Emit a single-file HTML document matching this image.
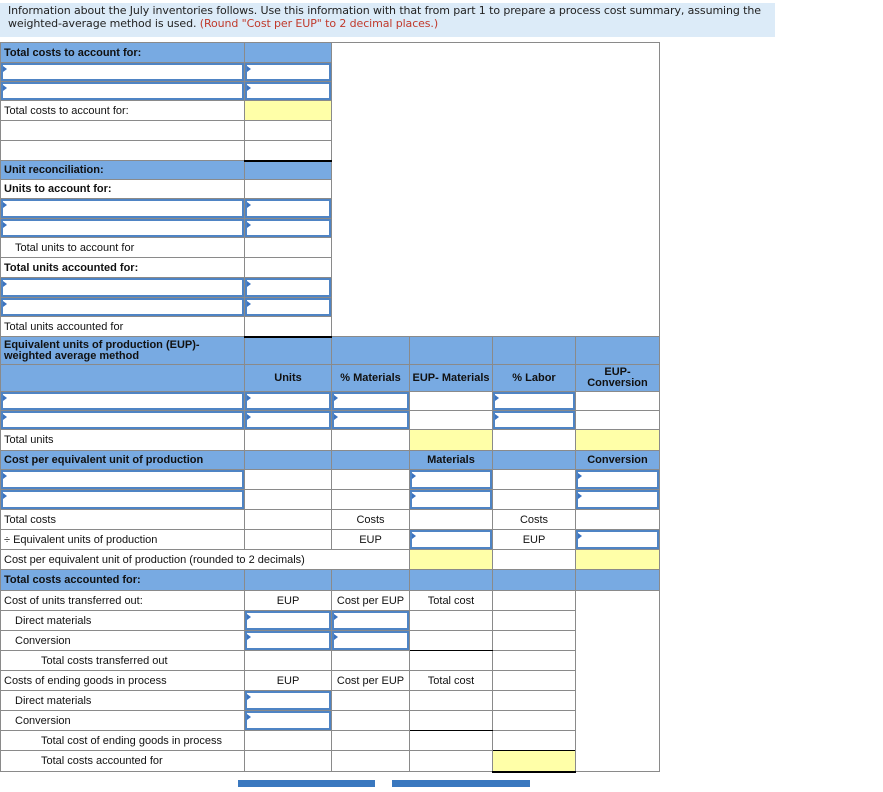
<!DOCTYPE html>
<html><head><meta charset="utf-8"><style>
body{margin:0;background:#fff;width:883px;height:792px;overflow:hidden;position:relative;font-family:"Liberation Sans",Arial,sans-serif;}
.hd{position:absolute;left:0;top:3px;width:775px;height:34px;background:#dcebf8;padding-left:8px;font-family:"DejaVu Sans",Verdana,sans-serif;font-size:11px;line-height:13px;color:#222;padding-top:1px;box-sizing:border-box;letter-spacing:-0.1px}
.hd span{color:#c0392b}
table{position:absolute;left:0;top:42px;border-collapse:collapse;table-layout:fixed;font-size:11px;color:#111}
td{border:1px solid #8a8a8a;padding:0 0 0 3px;white-space:nowrap;overflow:hidden;line-height:12px}
.b{background:#78aae2;font-weight:bold}
.i{box-shadow:inset 0 0 0 2px #4f84c4;position:relative}
.i:before{content:"";position:absolute;left:2px;top:3px;border-left:4px solid #3b73c0;border-top:3px solid transparent;border-bottom:3px solid transparent}
.y{background:#ffffa8}
.c{text-align:center;padding:0}
.bc{text-align:center;padding:0;font-weight:bold}
.p1{padding-left:14px}.p2{padding-left:40px}
.tb{border-bottom:2px solid #000}
.btn{position:absolute;top:780px;height:7px;background:#3a78bf}
</style></head><body>
<div class="hd">Information about the July inventories follows. Use this information with that from part 1 to prepare a process cost summary, assuming the weighted-average method is used. <span>(Round "Cost per EUP" to 2 decimal places.)</span></div>
<table>
<colgroup><col style="width:244px"><col style="width:87px"><col style="width:78px"><col style="width:83px"><col style="width:83px"><col style="width:84px"></colgroup>
<tr style="height:20px"><td class="b">Total costs to account for:</td><td class="b"></td><td colspan="4" rowspan="15" style="border-bottom:none;border-right:1px solid #8a8a8a"></td></tr>
<tr style="height:19px"><td class="i"></td><td class="i"></td></tr>
<tr style="height:19px"><td class="i"></td><td class="i"></td></tr>
<tr style="height:20px"><td>Total costs to account for:</td><td class="y"></td></tr>
<tr style="height:20px"><td></td><td></td></tr>
<tr style="height:20px"><td></td><td class="tb"></td></tr>
<tr style="height:19px"><td class="b">Unit reconciliation:</td><td class="b"></td></tr>
<tr style="height:19px"><td style="font-weight:bold">Units to account for:</td><td></td></tr>
<tr style="height:20px"><td class="i"></td><td class="i"></td></tr>
<tr style="height:19px"><td class="i"></td><td class="i"></td></tr>
<tr style="height:20px"><td class="p1">Total units to account for</td><td></td></tr>
<tr style="height:20px"><td style="font-weight:bold">Total units accounted for:</td><td></td></tr>
<tr style="height:20px"><td class="i"></td><td class="i"></td></tr>
<tr style="height:19px"><td class="i"></td><td class="i"></td></tr>
<tr style="height:20px"><td>Total units accounted for</td><td class="tb"></td></tr>
<tr style="height:28px"><td class="b" style="line-height:11px;white-space:normal">Equivalent units of production (EUP)-<br>weighted average method</td><td class="b"></td><td class="b"></td><td class="b"></td><td class="b"></td><td class="b"></td></tr>
<tr style="height:27px"><td class="b"></td><td class="b bc">Units</td><td class="b bc">% Materials</td><td class="b bc">EUP- Materials</td><td class="b bc">% Labor</td><td class="b bc" style="line-height:11px;white-space:normal">EUP-<br>Conversion</td></tr>
<tr style="height:19px"><td class="i"></td><td class="i"></td><td class="i"></td><td></td><td class="i"></td><td></td></tr>
<tr style="height:19px"><td class="i"></td><td class="i"></td><td class="i"></td><td></td><td class="i"></td><td></td></tr>
<tr style="height:21px"><td>Total units</td><td></td><td></td><td class="y"></td><td></td><td class="y"></td></tr>
<tr style="height:19px"><td class="b">Cost per equivalent unit of production</td><td class="b"></td><td class="b"></td><td class="b bc">Materials</td><td class="b"></td><td class="b bc">Conversion</td></tr>
<tr style="height:20px"><td class="i"></td><td></td><td></td><td class="i"></td><td></td><td class="i"></td></tr>
<tr style="height:20px"><td class="i"></td><td></td><td></td><td class="i"></td><td></td><td class="i"></td></tr>
<tr style="height:20px"><td>Total costs</td><td></td><td class="c">Costs</td><td></td><td class="c">Costs</td><td></td></tr>
<tr style="height:20px"><td>÷ Equivalent units of production</td><td></td><td class="c">EUP</td><td class="i"></td><td class="c">EUP</td><td class="i"></td></tr>
<tr style="height:20px"><td colspan="3" style="overflow:visible">Cost per equivalent unit of production (rounded to 2 decimals)</td><td class="y"></td><td></td><td class="y"></td></tr>
<tr style="height:21px"><td class="b">Total costs accounted for:</td><td class="b"></td><td class="b"></td><td class="b"></td><td class="b"></td><td class="b"></td></tr>
<tr style="height:20px"><td>Cost of units transferred out:</td><td class="c">EUP</td><td class="c">Cost per EUP</td><td class="c">Total cost</td><td></td><td rowspan="9"></td></tr>
<tr style="height:20px"><td class="p1">Direct materials</td><td class="i"></td><td class="i"></td><td></td><td></td></tr>
<tr style="height:20px"><td class="p1">Conversion</td><td class="i"></td><td class="i"></td><td style="border-bottom:1px solid #000"></td><td></td></tr>
<tr style="height:20px"><td class="p2">Total costs transferred out</td><td></td><td></td><td></td><td></td></tr>
<tr style="height:20px"><td>Costs of ending goods in process</td><td class="c">EUP</td><td class="c">Cost per EUP</td><td class="c">Total cost</td><td></td></tr>
<tr style="height:20px"><td class="p1">Direct materials</td><td class="i"></td><td></td><td></td><td></td></tr>
<tr style="height:20px"><td class="p1">Conversion</td><td class="i"></td><td></td><td style="border-bottom:1px solid #000"></td><td></td></tr>
<tr style="height:20px"><td class="p2">Total cost of ending goods in process</td><td></td><td></td><td></td><td style="border-bottom:1px solid #000"></td></tr>
<tr style="height:21px"><td class="p2">Total costs accounted for</td><td></td><td></td><td></td><td class="y tb"></td></tr>
</table>
<div class="btn" style="left:238px;width:137px"></div>
<div class="btn" style="left:392px;width:138px"></div>
</body></html>
